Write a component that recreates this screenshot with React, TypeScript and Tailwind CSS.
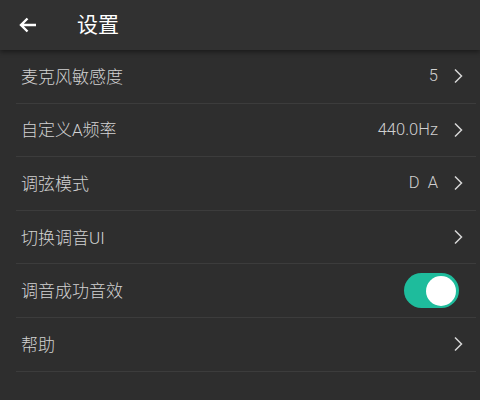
import React, { useState } from 'react';

const font = { fontFamily: 'Roboto, "Noto Sans CJK SC", sans-serif' };

interface Row {
    label: string;
    value?: string;
    toggle?: boolean;
}

const rows: Row[] = [
    { label: '麦克风敏感度', value: '5' },
    { label: '自定义A频率', value: '440.0Hz' },
    { label: '调弦模式', value: 'D  A' },
    { label: '切换调音UI', value: '' },
    { label: '调音成功音效', toggle: true },
    { label: '帮助', value: '' },
];

const Chevron = () => (
    <svg width="10" height="16" viewBox="0 0 10 16" className="ml-[15px]">
        <path d="M2 1.5 L8.5 8 L2 14.5" fill="none" stroke="#d6d6d6" strokeWidth="1.5" />
    </svg>
);

const App: React.FC = () => {
    const [sound, setSound] = useState(true);

    return (
        <div className="w-[480px] h-[400px] bg-[#2e2e2e] text-[#d2d2d2] overflow-hidden" style={font}>
            <div className="h-[50px] bg-[#313131] flex items-center shadow-[0_2px_5px_rgba(0,0,0,0.45)] relative z-10">
                <svg width="20" height="18" viewBox="0 0 20 18" className="ml-[18px]">
                    <path d="M18 9 H3 M9.5 2.5 L3 9 L9.5 15.5" fill="none" stroke="#ffffff" strokeWidth="2.4" />
                </svg>
                <span className="ml-[39px] text-[21px] text-white leading-none">设置</span>
            </div>
            <div className="pl-4 pr-1">
                {rows.map((row) => (
                    <div key={row.label} className="h-[53.6px] flex items-center border-b border-[#3c3c3c] pl-[5px] pr-[13px]">
                        <span className="text-[17px] font-light leading-none flex-1 pt-[2px]">{row.label}</span>
                        {row.toggle ? (
                            <button
                                onClick={() => setSound(!sound)}
                                className={`w-[55px] h-[35px] mr-[4px] rounded-full flex items-center px-[3px] ${sound ? 'bg-[#1ebc9c] justify-end' : 'bg-[#555] justify-start'}`}
                            >
                                <span className="w-[30px] h-[30px] rounded-full bg-white block" />
                            </button>
                        ) : (
                            <div className="flex items-center">
                                <span className="text-[16.5px] font-light leading-none whitespace-pre text-[#d0d0d0]">{row.value}</span>
                                <Chevron />
                            </div>
                        )}
                    </div>
                ))}
            </div>
        </div>
    );
};

export default App;
